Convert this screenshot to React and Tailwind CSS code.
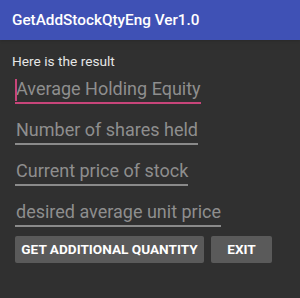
import React from 'react';

const fields = [
  { label: 'Average Holding Equity', focused: true },
  { label: 'Number of shares held' },
  { label: 'Current price of stock' },
  { label: 'desired average unit price' },
];

export default function App() {
  return (
    <div className="w-[300px] h-[298px] bg-[#303030] overflow-hidden" style={{ fontFamily: 'Roboto, sans-serif' }}>
      <div className="h-[40px] bg-[#3f51b5] flex items-center pl-[12px] shadow">
        <span className="text-white text-[15.3px] font-medium">GetAddStockQtyEng Ver1.0</span>
      </div>
      <div className="pl-[12px] pt-[13px]">
        <div className="text-[#e6e6e6] text-[13.7px] leading-[16px]">Here is the result</div>
        <div className="flex flex-col gap-[15px] mt-[9px] pl-[3px]">
          {fields.map(f => (
            <div key={f.label} className="relative self-start">
              <div className={`text-[18px] leading-[22px] pl-[1px] pb-[2px] text-[#8e8e8e] border-b-2 ${f.focused ? 'border-[#c8457a]' : 'border-[#8a8a8a]'}`}>
                {f.label}
              </div>
              {f.focused && <div className="absolute left-0 top-[1px] w-[2px] h-[22px] bg-[#c8457a]" />}
            </div>
          ))}
        </div>
        <div className="flex gap-[7px] mt-[9px] pl-[3px]">
          <button className="h-[27px] w-[189px] bg-[#5a5a5a] rounded-[2px] text-white text-[13.6px] font-bold">GET ADDITIONAL QUANTITY</button>
          <button className="h-[27px] w-[61px] bg-[#5a5a5a] rounded-[2px] text-white text-[13.6px] font-bold">EXIT</button>
        </div>
      </div>
    </div>
  );
}
